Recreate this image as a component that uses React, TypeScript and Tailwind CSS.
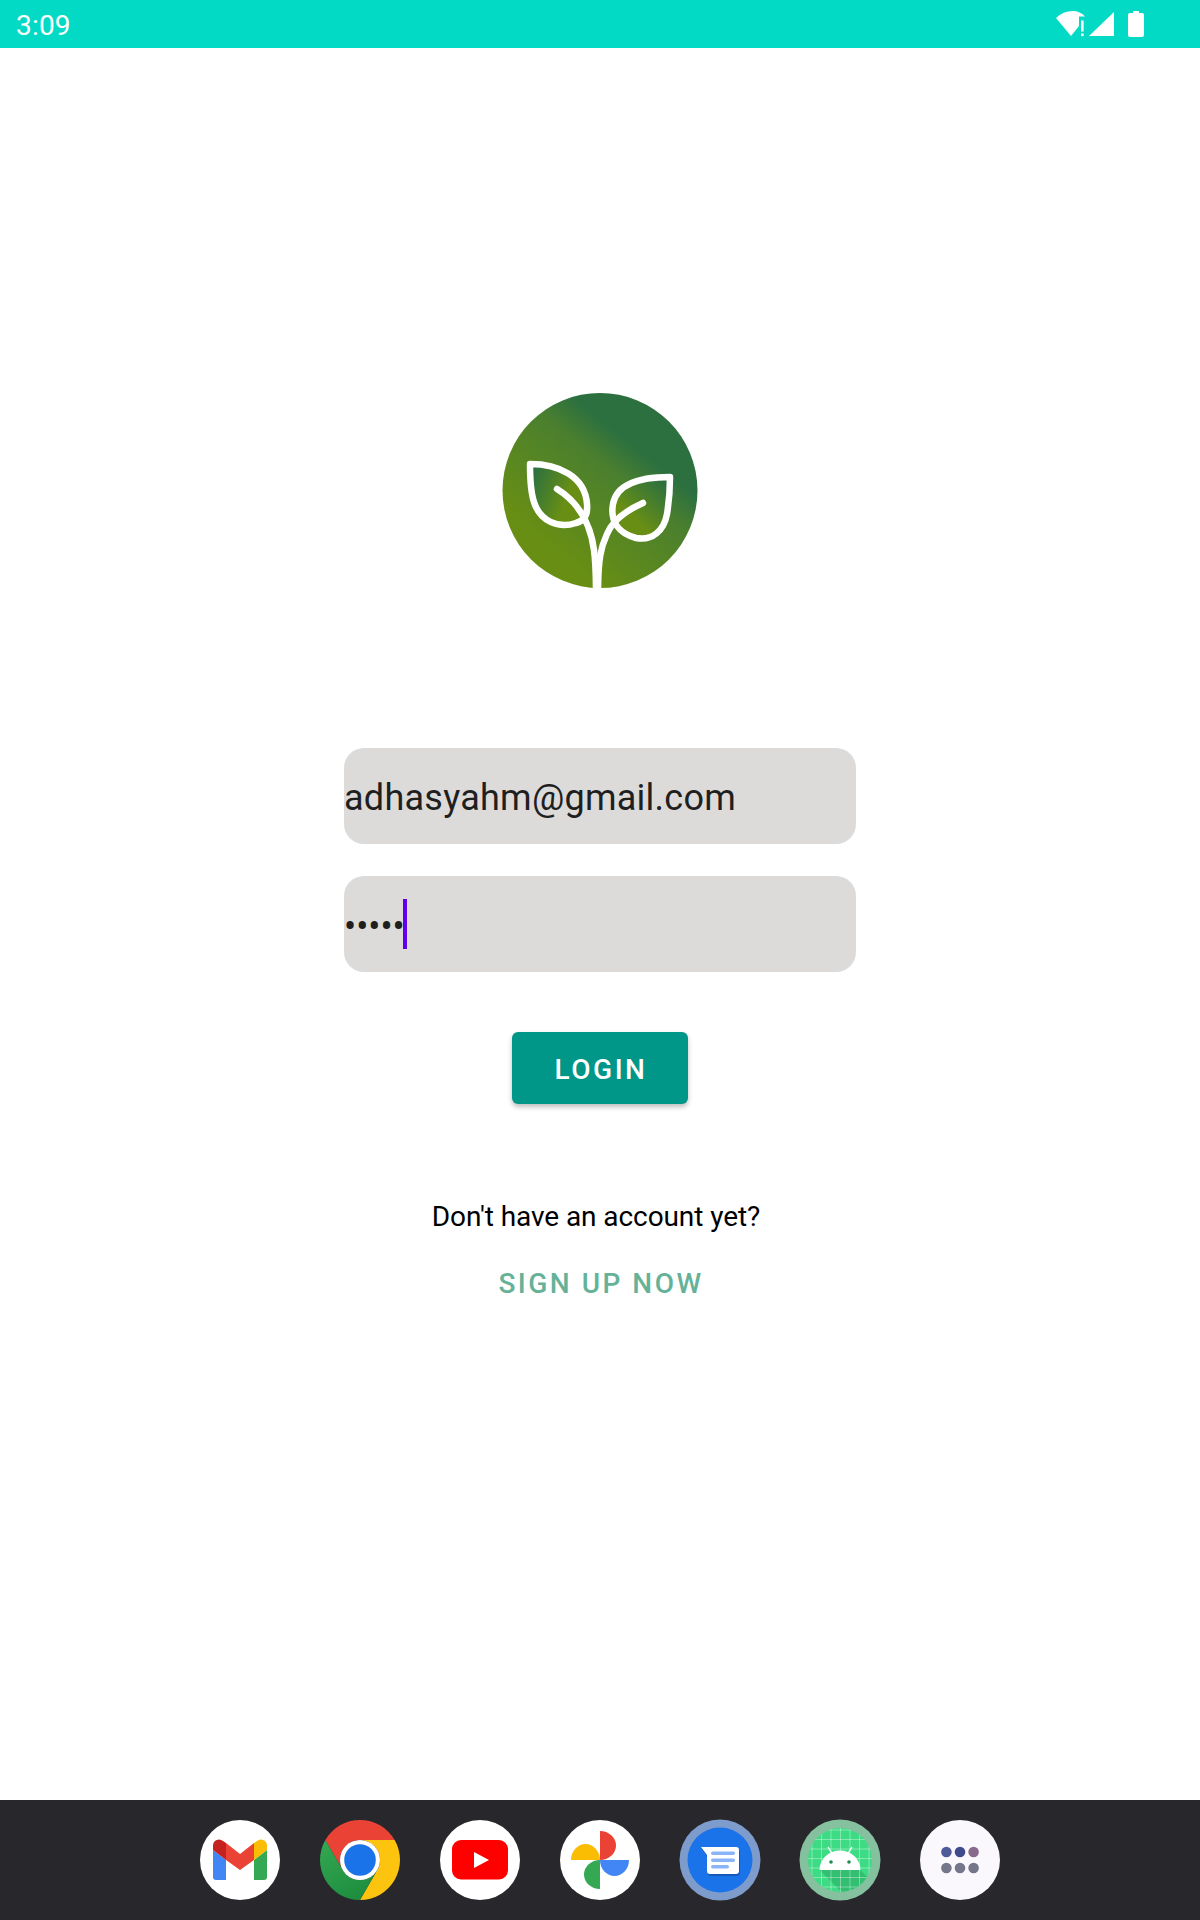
function StatusIcons() {
  return (
    <svg width="160" height="48" viewBox="0 0 160 48" className="block" fill="#fff">
      <path d="M31 36 L16 18 Q23 11 33 11 Q40 11 45 16.5 L39 16.5 V26 Z" />
      <rect x="41" y="20.5" width="2.6" height="11" />
      <rect x="41" y="33.5" width="2.6" height="2.6" />
      <path d="M49 36 L74 12 V36 Z" />
      <path d="M93 13 V11.5 a0.5 0.5 0 0 1 0.5 -0.5 H98.5 a0.5 0.5 0 0 1 0.5 0.5 V13 H102 a2 2 0 0 1 2 2 V35 a2 2 0 0 1 -2 2 H90 a2 2 0 0 1 -2 -2 V15 a2 2 0 0 1 2 -2 Z" />
    </svg>
  );
}

function Logo() {
  return (
    <svg width="196" height="196" viewBox="12 13 196 196" className="block">
      <defs>
        <linearGradient id="bg" gradientUnits="userSpaceOnUse" x1="133" y1="57" x2="50" y2="160">
          <stop offset="0" stopColor="#2C7040" />
          <stop offset="0.25" stopColor="#4A7F2E" />
          <stop offset="1" stopColor="#688F14" />
        </linearGradient>
        <linearGradient id="lf1" gradientUnits="userSpaceOnUse" x1="42" y1="95" x2="80" y2="110">
          <stop offset="0" stopColor="#2C7040" />
          <stop offset="1" stopColor="#688F14" />
        </linearGradient>
        <linearGradient id="lf2" gradientUnits="userSpaceOnUse" x1="172" y1="100" x2="140" y2="135">
          <stop offset="0" stopColor="#2C7040" />
          <stop offset="1" stopColor="#688F14" />
        </linearGradient>
        <clipPath id="cc"><circle cx="110" cy="110.5" r="97.5" /></clipPath>
      </defs>
      <circle cx="110" cy="110.5" r="97.5" fill="url(#bg)" />
      <g clipPath="url(#cc)" stroke="#fff" strokeWidth="6.5" strokeLinecap="round" strokeLinejoin="round">
        <path fill="url(#lf1)" d="M40 84 C68 84 95 96 97 124 C98 135 94 141 86 143 C68 149 50 141 44 122 C40 110 40 96 40 84 Z" />
        <path fill="url(#lf2)" d="M180 97 C155 97 127 102 123 124 C120 141 128 153 146 158 C162 161 174 151 177 134 C179 122 180 110 180 97 Z" />
        <path fill="none" d="M67 109 C85 120 100 140 104 170 C106 185 106 197 106 215" />
        <path fill="none" d="M153 123 C135 131 122 142 117 154 C111 167 108 178 108 215" />
      </g>
    </svg>
  );
}

function Gmail() {
  return (
    <svg width="80" height="80" viewBox="0 0 80 80" className="block">
      <circle cx="40" cy="40" r="40" fill="#fff" />
      <path fill="#4285F4" d="M13 30 L26 40 V60 H16 a3 3 0 0 1 -3 -3 Z" />
      <path fill="#34A853" d="M67 30 L54 40 V60 H64 a3 3 0 0 0 3 -3 Z" />
      <path fill="#C5221F" d="M13 30 V25 a6 6 0 0 1 10 -4 L26 23 V40 Z" />
      <path fill="#FBBC04" d="M54 23 L57 21 a6 6 0 0 1 10 4 V30 L54 40 Z" />
      <path fill="#EA4335" d="M26 23 L40 34 L54 23 V40 L40 50 L26 40 Z" />
    </svg>
  );
}

function Chrome() {
  return (
    <svg width="80" height="80" viewBox="0 0 80 80" className="block">
      <defs>
        <linearGradient id="cg" x1="0" y1="0" x2="0.6" y2="1">
          <stop offset="0" stopColor="#34A853" />
          <stop offset="1" stopColor="#1E8E3E" />
        </linearGradient>
      </defs>
      <path fill="#EA4335" d="M40 20 H74.64 A40 40 0 0 0 5.36 20 L22.68 50 A20 20 0 0 1 40 20 Z" />
      <path fill="#FCC30F" d="M74.64 20 A40 40 0 0 1 40 80 L57.32 50 A20 20 0 0 0 40 20 Z" />
      <path fill="url(#cg)" d="M5.36 20 A40 40 0 0 0 40 80 L57.32 50 A20 20 0 0 1 22.68 50 Z" />
      <circle cx="40" cy="40" r="20" fill="#fff" />
      <circle cx="40" cy="40" r="15.8" fill="#1A73E8" />
    </svg>
  );
}

function YouTube() {
  return (
    <svg width="80" height="80" viewBox="0 0 80 80" className="block">
      <circle cx="40" cy="40" r="40" fill="#fff" />
      <rect x="12" y="20" width="56" height="39.5" rx="9" fill="#FF0000" />
      <path fill="#fff" d="M34 32 L49 40 L34 48 Z" />
    </svg>
  );
}

function Photos() {
  return (
    <svg width="80" height="80" viewBox="0 0 80 80" className="block">
      <circle cx="40" cy="40" r="40" fill="#fff" />
      <path fill="#EA4335" d="M40 40 V11 A16 14.5 0 0 1 40 40 Z" />
      <path fill="#4285F4" d="M40 40 H69 A14.5 16 0 0 1 40 40 Z" />
      <path fill="#34A853" d="M40 40 V69 A16 14.5 0 0 1 40 40 Z" />
      <path fill="#FBBC04" d="M40 40 H11 A14.5 16 0 0 1 40 40 Z" />
    </svg>
  );
}

function Messages() {
  return (
    <svg width="80" height="80" viewBox="0 0 80 80" className="block overflow-visible">
      <circle cx="40" cy="40" r="40.5" fill="#7D9CCB" />
      <circle cx="40" cy="40" r="32.5" fill="#1A73E8" />
      <path fill="#185ABC" d="M22 29 H57 a3 3 0 0 1 3 3 V53 a3 3 0 0 1 -3 3 H31 a3 3 0 0 1 -3 -3 V37 Z" />
      <path fill="#fff" d="M21 27 H56 a3 3 0 0 1 3 3 V51 a3 3 0 0 1 -3 3 H30 a3 3 0 0 1 -3 -3 V35 Z" />
      <rect x="31" y="31.5" width="24" height="3.5" rx="1.7" fill="#8AB4F8" />
      <rect x="31" y="38.5" width="24" height="3.5" rx="1.7" fill="#8AB4F8" />
      <rect x="31" y="45" width="18" height="3.5" rx="1.7" fill="#8AB4F8" />
    </svg>
  );
}

function AndroidStudio() {
  const lines = [12, 21.5, 31, 40.5, 50, 59.5, 69];
  return (
    <svg width="80" height="80" viewBox="0 0 80 80" className="block overflow-visible">
      <defs>
        <clipPath id="ac"><circle cx="40" cy="40" r="32" /></clipPath>
      </defs>
      <circle cx="40" cy="40" r="40.5" fill="#86C19F" />
      <circle cx="40" cy="40" r="32" fill="#3DDC84" />
      <g clipPath="url(#ac)">
        <path fill="#2FB56B" fillOpacity="0.75" d="M19.5 50 H60.5 L84 74 V84 H54 Z" />
        {lines.map((v) => (
          <g key={v} stroke="#fff" strokeOpacity="0.45" strokeWidth="0.8">
            <line x1={v} y1="0" x2={v} y2="80" />
            <line x1="0" y1={v - 2} x2="80" y2={v - 2} />
          </g>
        ))}
      </g>
      <path stroke="#fff" strokeWidth="1.4" d="M28 27 L33 35 M52 27 L47 35" />
      <path fill="#fff" d="M19.5 50 A20.5 19.5 0 0 1 60.5 50 Z" />
      <circle cx="31" cy="42" r="1.8" fill="#1E8E4E" />
      <circle cx="49" cy="42" r="1.8" fill="#1E8E4E" />
    </svg>
  );
}

function Apps() {
  const colors = ["#4E5B9A", "#3F4B8C", "#8A6A8C", "#747689", "#747689", "#747689"];
  return (
    <svg width="80" height="80" viewBox="0 0 80 80" className="block">
      <circle cx="40" cy="40" r="40" fill="#FBF8FD" />
      {colors.map((c, i) => (
        <circle key={i} cx={26.4 + (i % 3) * 13.6} cy={i < 3 ? 32 : 48} r="5.3" fill={c} />
      ))}
    </svg>
  );
}

export default function App() {
  return (
    <div className="flex h-[1920px] w-[1200px] flex-col bg-white font-['Roboto',sans-serif]">
      <div className="flex h-12 items-center justify-between bg-[#03DAC5] pl-4 text-[28px] text-white">
        <span className="pt-1 tracking-[0.2px]">3:09</span>
        <StatusIcons />
      </div>

      <main className="flex flex-1 flex-col items-center pt-[345px]">
        <Logo />

        <div className="mt-[159px] flex h-[96px] w-[512px] items-center rounded-[20px] bg-[#DCDBDA] pt-[4px] text-[36px] tracking-[0.25px] text-[#1f1f1f]">
          adhasyahm@gmail.com
        </div>

        <div className="mt-8 flex h-[96px] w-[512px] items-center rounded-[20px] bg-[#DCDBDA] text-[36px] text-[#1f1f1f]">
          <span className="pt-[5px]">•••••</span>
          <span className="-ml-[2px] h-[50px] w-1 bg-[#6200EE]" />
        </div>

        <button className="mt-[60px] h-[72px] w-[176px] rounded-md bg-[#009688] pt-1 pl-[2px] text-[28px] font-medium tracking-[2.5px] text-white shadow-[0_3px_5px_rgba(0,0,0,0.25)]">
          LOGIN
        </button>

        <p className="mt-[96px] -translate-x-[4px] text-[28px] leading-[33px] tracking-[-0.08px] text-black">Don't have an account yet?</p>

        <p className="mt-[34px] pl-[2px] text-[28px] font-medium leading-[33px] tracking-[2.5px] text-[#66B298]">SIGN UP NOW</p>
      </main>

      <nav className="flex h-[120px] items-center justify-center gap-10 bg-[#27272C]">
        <Gmail />
        <Chrome />
        <YouTube />
        <Photos />
        <Messages />
        <AndroidStudio />
        <Apps />
      </nav>
    </div>
  );
}
